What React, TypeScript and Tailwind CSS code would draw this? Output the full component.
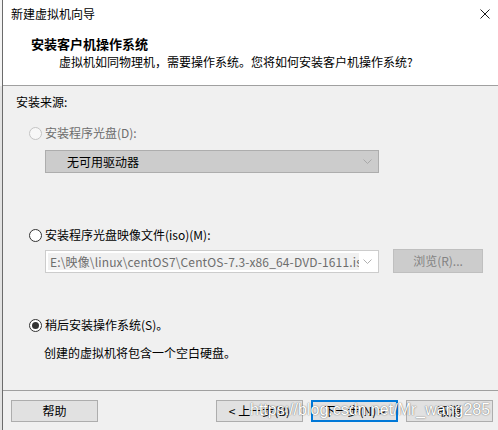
import React from "react";

function Radio({ state }: { state: "disabled" | "off" | "on" }) {
  const border =
    state === "disabled" ? "border-[#c4c4c4] bg-[#f7f7f7]" : "border-[#333333] bg-white";
  return (
    <div
      className={`w-[13px] h-[13px] rounded-full border ${border} flex items-center justify-center shrink-0`}
    >
      {state === "on" && <div className="w-[7px] h-[7px] rounded-full bg-[#333333]" />}
    </div>
  );
}

function Chevron({ color }: { color: string }) {
  return (
    <svg width="9" height="5" viewBox="0 0 9 5" className="shrink-0">
      <path d="M0.5 0.5 L4.5 4.5 L8.5 0.5" fill="none" stroke={color} strokeWidth="1" />
    </svg>
  );
}

function Btn({ children, focus }: { children: React.ReactNode; focus?: boolean }) {
  return (
    <div
      className={`w-[87px] h-[22px] flex items-center justify-center bg-[#e1e1e1] text-[12px] leading-[16px] text-black ${
        focus ? "border-2 border-[#0078d7]" : "border border-[#adadad]"
      }`}
    >
      {children}
    </div>
  );
}

export default function App() {
  return (
    <div className="w-[498px] h-[430px] flex overflow-hidden bg-[#f0f0f0] relative [font-family:'Noto_Sans_CJK_SC','Noto_Sans',sans-serif] text-black">
      <div className="w-[2px] flex flex-col">
        <div className="h-[86px] bg-[#f4f4f4]" />
        <div className="flex-1 bg-[#e2e2e2]" />
      </div>
      <div className="w-[1px] bg-[#6b6b6b]" />
      <div className="flex-1 flex flex-col">
        <div className="h-[28px] bg-white flex items-center justify-between pl-[8px] pr-[8px]">
          <span className="text-[12px] leading-[16px]">新建虚拟机向导</span>
          <svg width="10" height="10" viewBox="0 0 10 10">
            <path d="M0.5 0.5 L9.5 9.5 M9.5 0.5 L0.5 9.5" stroke="#1a1a1a" strokeWidth="1" />
          </svg>
        </div>
        <div className="bg-white pt-[7px] pb-[14px] border-b border-[#a0a0a0]">
          <div className="pl-[28px] text-[13px] font-bold leading-[18px]">安装客户机操作系统</div>
          <div className="pl-[56px] text-[12px] leading-[18px]">
            虚拟机如同物理机，需要操作系统。您将如何安装客户机操作系统?
          </div>
        </div>
        <div className="flex flex-col pl-[13px] text-[12px] leading-[18px]">
          <div className="mt-[7px]">安装来源:</div>
          <div className="mt-[13px] ml-[13px] flex items-center gap-[3px] h-[18px]">
            <Radio state="disabled" />
            <span className="text-[#6d6d6d]">安装程序光盘(D):</span>
          </div>
          <div className="mt-[8px] ml-[29px] w-[334px] h-[23px] bg-[#cccccc] border border-[#adadad] flex items-center justify-between pl-[21px] pr-[6px]">
            <span>无可用驱动器</span>
            <Chevron color="#a8a8a8" />
          </div>
          <div className="mt-[53px] ml-[13px] flex items-center gap-[3px] h-[18px]">
            <Radio state="off" />
            <span>安装程序光盘映像文件(iso)(M):</span>
          </div>
          <div className="mt-[5px] ml-[29px] flex items-start">
            <div className="mt-[1px] w-[334px] h-[23px] bg-white border border-[#cccccc] flex items-center pl-[2px] pr-[6px]">
              <div className="w-[311px] h-[17px] bg-[#f0f0f0] overflow-hidden whitespace-nowrap text-[#6d6d6d] leading-[17px] pl-[2px] tracking-[0.15px]">
                E:\映像\linux\centOS7\CentOS-7.3-x86_64-DVD-1611.iso
              </div>
              <div className="flex-1" />
              <Chevron color="#b0b0b0" />
            </div>
            <div className="ml-[14px] w-[90px] h-[24px] bg-[#cccccc] border border-[#bfbfbf] flex items-center justify-center text-[#838383]">
              浏览(R)...
            </div>
          </div>
          <div className="mt-[43px] ml-[13px] flex items-center gap-[3px] h-[18px]">
            <Radio state="on" />
            <span>稍后安装操作系统(S)。</span>
          </div>
          <div className="mt-[10px] ml-[28px]">创建的虚拟机将包含一个空白硬盘。</div>
        </div>
        <div className="mt-auto h-[40px] border-t border-[#a0a0a0] pt-[9px] pl-[8px] pr-[5px] flex items-start">
          <Btn>帮助</Btn>
          <div className="flex-1" />
          <div className="flex gap-[8px]">
            <Btn>&lt; 上一步(B)</Btn>
            <Btn focus>下一步(N) &gt;</Btn>
            <Btn>取消</Btn>
          </div>
        </div>
      </div>
      <div className="absolute left-[250px] top-[401px] text-[16px] leading-[18px] whitespace-nowrap text-white [font-family:'Liberation_Sans',sans-serif] [text-shadow:0_0_1px_rgba(0,0,0,0.55),0_0_2px_rgba(0,0,0,0.25)] pointer-events-none">
        https://blog.csdn.net/Mr_wang285
      </div>
    </div>
  );
}
